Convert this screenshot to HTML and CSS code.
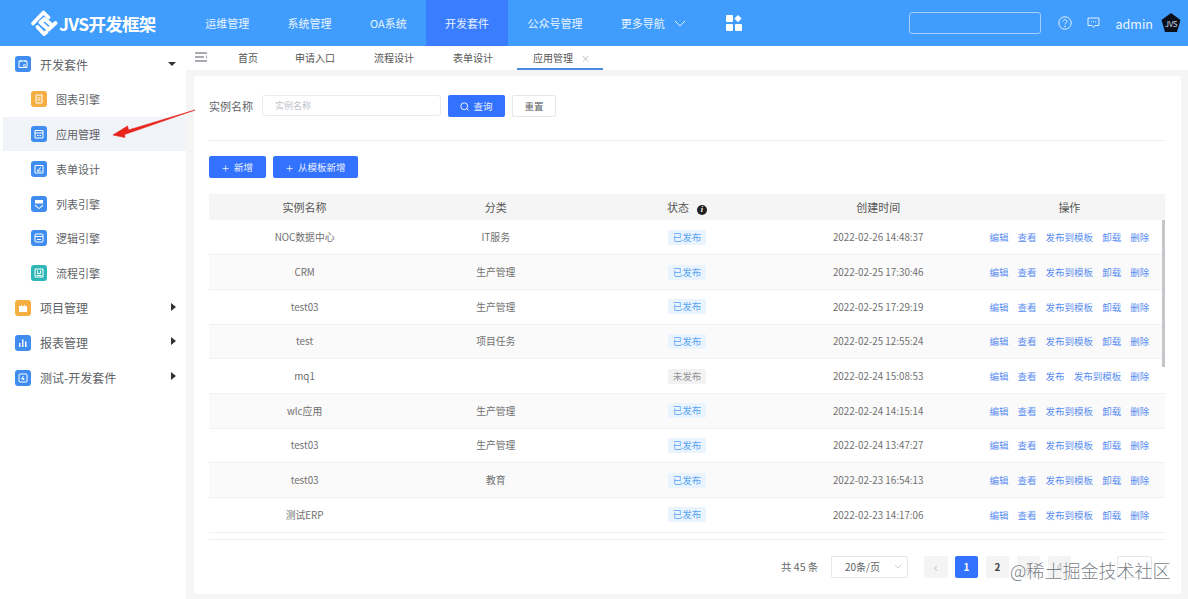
FILE: index.html
```html
<!DOCTYPE html>
<html lang="zh">
<head>
<meta charset="utf-8">
<title>JVS开发框架</title>
<link rel="stylesheet" href="styles.css">
</head>
<body>
<header class="topbar">
  <div class="logo">
    <svg class="logo-mark" viewBox="0 0 28 28" width="28" height="28" fill="none" stroke="#fff" stroke-width="3.800" stroke-linejoin="round" stroke-linecap="round">
      <path d="M3 14.500 L13.500 3.500 L18.500 8.500"/>
      <path d="M25.500 14 L18.500 20.500 L10.500 13.500 L14.500 10 L20.500 15"/>
      <path d="M7.500 18 L14 25 L16.500 23"/>
    </svg>
    <span class="logo-text">JVS开发框架</span>
  </div>
  <nav class="nav">
    <a class="nav-item">运维管理</a>
    <a class="nav-item">系统管理</a>
    <a class="nav-item">OA系统</a>
    <a class="nav-item is-active">开发套件</a>
    <a class="nav-item">公众号管理</a>
    <a class="nav-item nav-more">更多导航
      <svg viewBox="0 0 12 7" width="12" height="7" fill="none" stroke="#e4f0ff" stroke-width="1"><path d="M1 1l5 5 5-5"/></svg>
    </a>
    <svg class="apps" viewBox="0 0 16 16" width="16" height="16" fill="#fff">
      <rect x="0" y="0" width="7" height="7" rx="1"/>
      <path d="M12 0l3.600 3.600L12 7.200 8.400 3.600z"/>
      <rect x="0" y="9" width="7" height="7" rx="1"/>
      <rect x="9" y="9" width="7" height="7" rx="1"/>
    </svg>
  </nav>
  <div class="top-right">
    <div class="top-search"></div>
    <svg class="top-icon" viewBox="0 0 14 14" width="14" height="14" fill="none" stroke="#e4f0ff" stroke-width="1"><circle cx="7" cy="7" r="6.200"/><path d="M5.200 5.400a1.800 1.800 0 1 1 2.700 1.600c-.6.400-.9.700-.9 1.400"/><circle cx="7" cy="10.300" r=".4"/></svg>
    <svg class="top-icon msg" viewBox="0 0 13 12" width="13" height="12" fill="none" stroke="#e4f0ff" stroke-width="1"><path d="M1 1h11v7.500H8L6.500 10.500 5 8.500H1z"/><path d="M4 4.700h1M6 4.700h1M8 4.700h1"/></svg>
    <span class="user">admin</span>
    <div class="avatar"><svg viewBox="0 0 20 20" width="20" height="20"><path d="M10 0l9.500 7-3.500 12H4L.5 7z" fill="#0b0f1a"/></svg><span class="avatar-text">JVS</span></div>
  </div>
</header>

<div class="shell">
  <aside class="sidebar">
    <div class="menu-row top">
      <span class="ico blue"><svg viewBox="0 0 10 10" width="10" height="10" fill="none" stroke="#fff" stroke-width="1"><path d="M1 2h8v6.500H1zM3 1v2M7 1v2"/><circle cx="6.500" cy="6.500" r="1"/></svg></span>
      <span class="menu-label">开发套件</span><span class="caret down"></span>
    </div>
    <div class="menu-row sub">
      <span class="ico orange"><svg viewBox="0 0 10 10" width="10" height="10" fill="none" stroke="#fff" stroke-width="1"><path d="M2 1h6v8H2zM3.500 4h3M3.500 6h3"/></svg></span>
      <span class="sub-label">图表引擎</span>
    </div>
    <div class="menu-row sub is-current">
      <span class="ico blue"><svg viewBox="0 0 10 10" width="10" height="10" fill="none" stroke="#fff" stroke-width="1"><path d="M1 4V1.500h8V4M1 4h8v5H1z"/><path d="M3 6.500h1.500M5.500 6.500H7"/></svg></span>
      <span class="sub-label">应用管理</span>
    </div>
    <div class="menu-row sub">
      <span class="ico blue"><svg viewBox="0 0 10 10" width="10" height="10" fill="none" stroke="#fff" stroke-width="1"><path d="M1 1.500h8v7.500H1zM3 7l4-3.500M3 7h4"/></svg></span>
      <span class="sub-label">表单设计</span>
    </div>
    <div class="menu-row sub">
      <span class="ico blue"><svg viewBox="0 0 10 10" width="10" height="10" fill="#fff"><path d="M1 1h8v3.500H1zM1 5.500l4 3.500 4-3.500v1.500L5 10 1 7z"/></svg></span>
      <span class="sub-label">列表引擎</span>
    </div>
    <div class="menu-row sub">
      <span class="ico blue"><svg viewBox="0 0 10 10" width="10" height="10" fill="none" stroke="#fff" stroke-width="1"><rect x="1" y="1" width="8" height="8" rx="1"/><path d="M1 3.500h8M3 6.500h4"/></svg></span>
      <span class="sub-label">逻辑引擎</span>
    </div>
    <div class="menu-row sub">
      <span class="ico teal"><svg viewBox="0 0 10 10" width="10" height="10" fill="none" stroke="#fff" stroke-width="1"><path d="M1 1h8v8H1zM3.500 2.500v3h3v-3M2.500 7.500h5"/></svg></span>
      <span class="sub-label">流程引擎</span>
    </div>
    <div class="menu-row top">
      <span class="ico orange"><svg viewBox="0 0 10 10" width="10" height="10" fill="#fff"><path d="M1 3h8v6H1zM3 1l1 2H3zM7 1L6 3h1z"/></svg></span>
      <span class="menu-label">项目管理</span><span class="caret right"></span>
    </div>
    <div class="menu-row top">
      <span class="ico blue"><svg viewBox="0 0 10 10" width="10" height="10" fill="#fff"><path d="M1 5h1.500v4H1zM4 1.500h1.500V9H4zM7 3.500h1.500V9H7z"/></svg></span>
      <span class="menu-label">报表管理</span><span class="caret right"></span>
    </div>
    <div class="menu-row top">
      <span class="ico blue"><svg viewBox="0 0 10 10" width="10" height="10" fill="none" stroke="#fff" stroke-width="1"><rect x="1" y="1" width="8" height="8" rx="1"/><path d="M5.500 3L3.500 6h3M5.500 5v2"/></svg></span>
      <span class="menu-label">测试-开发套件</span><span class="caret right"></span>
    </div>
  </aside>

  <main class="main">
    <div class="tabs">
      <svg class="hamburger" viewBox="0 0 12 10" width="12" height="10" fill="none" stroke="#556" stroke-width="1"><path d="M0 1h12M0 5h9M0 9h12M12 3.500v3"/></svg>
      <a class="tab first">首页</a>
      <a class="tab">申请入口</a>
      <a class="tab">流程设计</a>
      <a class="tab">表单设计</a>
      <a class="tab is-active">应用管理<span class="tab-x">×</span></a>
    </div>
    <div class="content">
      <section class="card">
        <form class="filter">
          <label class="filter-label">实例名称</label>
          <div class="input">实例名称</div>
          <button type="button" class="btn primary"><svg viewBox="0 0 10 10" width="9" height="9" fill="none" stroke="#fff" stroke-width="1"><circle cx="4.700" cy="4.700" r="3.800"/><path d="M7.500 7.500l2 2"/></svg>查询</button>
          <button type="button" class="btn plain">重置</button>
        </form>
        <div class="actions">
          <button type="button" class="btn primary wide"><span class="plus">+</span>新增</button>
          <button type="button" class="btn primary wide"><span class="plus">+</span>从模板新增</button>
        </div>
        <div class="table-wrap">
          <table class="table">
            <thead>
              <tr><th>实例名称</th><th>分类</th><th>状态<span class="info">i</span></th><th>创建时间</th><th>操作</th></tr>
            </thead>
            <tbody>
              <tr><td>NOC数据中心</td><td>IT服务</td><td><span class="tag">已发布</span></td><td>2022-02-26 14:48:37</td><td class="ops"><a>编辑</a><a>查看</a><a>发布到模板</a><a>卸载</a><a>删除</a></td></tr>
              <tr class="alt"><td>CRM</td><td>生产管理</td><td><span class="tag">已发布</span></td><td>2022-02-25 17:30:46</td><td class="ops"><a>编辑</a><a>查看</a><a>发布到模板</a><a>卸载</a><a>删除</a></td></tr>
              <tr><td>test03</td><td>生产管理</td><td><span class="tag">已发布</span></td><td>2022-02-25 17:29:19</td><td class="ops"><a>编辑</a><a>查看</a><a>发布到模板</a><a>卸载</a><a>删除</a></td></tr>
              <tr class="alt"><td>test</td><td>项目任务</td><td><span class="tag">已发布</span></td><td>2022-02-25 12:55:24</td><td class="ops"><a>编辑</a><a>查看</a><a>发布到模板</a><a>卸载</a><a>删除</a></td></tr>
              <tr><td>mq1</td><td></td><td><span class="tag off">未发布</span></td><td>2022-02-24 15:08:53</td><td class="ops"><a>编辑</a><a>查看</a><a>发布</a><a>发布到模板</a><a>删除</a></td></tr>
              <tr class="alt"><td>wlc应用</td><td>生产管理</td><td><span class="tag">已发布</span></td><td>2022-02-24 14:15:14</td><td class="ops"><a>编辑</a><a>查看</a><a>发布到模板</a><a>卸载</a><a>删除</a></td></tr>
              <tr><td>test03</td><td>生产管理</td><td><span class="tag">已发布</span></td><td>2022-02-24 13:47:27</td><td class="ops"><a>编辑</a><a>查看</a><a>发布到模板</a><a>卸载</a><a>删除</a></td></tr>
              <tr class="alt"><td>test03</td><td>教育</td><td><span class="tag">已发布</span></td><td>2022-02-23 16:54:13</td><td class="ops"><a>编辑</a><a>查看</a><a>发布到模板</a><a>卸载</a><a>删除</a></td></tr>
              <tr><td>测试ERP</td><td></td><td><span class="tag">已发布</span></td><td>2022-02-23 14:17:06</td><td class="ops"><a>编辑</a><a>查看</a><a>发布到模板</a><a>卸载</a><a>删除</a></td></tr>
            </tbody>
          </table>
          <div class="scrollbar"></div>
        </div>
        <div class="pager">
          <span class="total">共 45 条</span>
          <div class="size">20条/页<svg viewBox="0 0 8 5" width="8" height="5" fill="none" stroke="#c5c8ce" stroke-width=".8"><path d="M1 1l3 3 3-3"/></svg></div>
          <span class="pg prev">‹</span>
          <span class="pg on">1</span>
          <span class="pg">2</span>
          <span class="pg faint">3</span>
          <span class="pg faint">4</span>
          <span class="pg-gap"></span>
          <span class="pg-input"></span>
        </div>
      </section>
    </div>
  </main>
</div>

<svg class="arrow" viewBox="0 0 90 32" width="90" height="32"><path d="M86 4L19.500 24 18.500 20 4 29l12 2.500-.5-3z" fill="#e8231c" stroke="#e8231c" stroke-width=".6" stroke-linejoin="round"/></svg>
<div class="watermark">@稀土掘金技术社区</div>
</body>
</html>
```

FILE: styles.css
```css
* { box-sizing: border-box; }
html, body { margin: 0; height: 100%; }
body {
  width: 1188px;
  height: 599px;
  overflow: hidden;
  background: #f5f5f5;
  color: #606266;
  font-family: "Noto Sans CJK SC", "Noto Sans", sans-serif;
  font-size: 10px;
  position: relative;
}
a { color: inherit; text-decoration: none; }

/* top bar */
.topbar {
  height: 46px;
  background: #409dfe;
  display: flex;
  align-items: stretch;
  color: #e9f3ff;
}
.logo {
  width: 186px;
  padding-left: 30px;
  display: flex;
  align-items: center;
  gap: 1px;
  flex: none;
}
.logo-mark { flex: none; }
.logo-text { font-size: 17.500px; font-weight: 700; color: #fff; letter-spacing: -.7px; white-space: nowrap; }
.nav { display: flex; align-items: stretch; flex: none; }
.nav-item {
  padding: 0 19.200px;
  display: flex;
  align-items: center;
  gap: 9px;
  font-size: 11px;
  white-space: nowrap;
}
.nav-item.is-active { background: #3a7dff; }
.apps { align-self: center; margin-left: 21px; }
.top-right {
  margin-left: auto;
  display: flex;
  align-items: center;
  padding-right: 7px;
}
.top-search {
  width: 132px;
  height: 22px;
  border: 1px solid #a6d0fb;
  border-radius: 3px;
  margin-right: 17px;
}
.top-icon { flex: none; }
.top-icon.msg { margin-left: 15px; }
.user { font-size: 12.500px; margin-left: 16px; color: #eef6ff; }
.avatar { width: 20px; height: 20px; margin-left: 8px; position: relative; }
.avatar svg { display: block; }
.avatar-text {
  position: absolute;
  inset: 0;
  text-align: center;
  line-height: 21px;
  font-size: 8px;
  color: #c8d4e6;
  letter-spacing: -.4px;
}

/* shell */
.shell { display: flex; height: 553px; }
.sidebar {
  width: 186px;
  flex: none;
  background: #fff;
  padding-top: 1px;
}
.menu-row {
  height: 34.800px;
  display: flex;
  align-items: center;
  position: relative;
  margin-left: 3px;
}
.menu-row.top { padding-left: 12px; }
.menu-row.sub { padding-left: 28px; }
.menu-row.is-current { background: #f0f3f8; }
.ico {
  width: 16px;
  height: 16px;
  border-radius: 3px;
  display: flex;
  align-items: center;
  justify-content: center;
  flex: none;
}
.ico.blue { background: #3f8df0; }
.ico.orange { background: #f4ae42; }
.ico.teal { background: #2fb6b6; }
.menu-label { font-size: 12px; margin-left: 9px; color: #606266; }
.sub-label { font-size: 11px; margin-left: 9px; color: #606266; }
.caret { position: absolute; width: 0; height: 0; }
.caret.down { right: 10px; top: 15px; border: 4px solid transparent; border-top: 4.500px solid #303133; border-bottom: 0; }
.caret.right { right: 10px; top: 12px; border: 4px solid transparent; border-left: 5px solid #303133; border-right: 0; }

/* main */
.main { flex: 1; display: flex; flex-direction: column; min-width: 0; }
.tabs {
  height: 24px;
  background: #fff;
  display: flex;
  align-items: stretch;
  padding-left: 9px;
  flex: none;
}
.hamburger { align-self: center; margin-right: 11.500px; flex: none; margin-top: -2px; }
.tab {
  padding: 0 19.500px;
  line-height: 24px;
  font-size: 10px;
  color: #555;
  white-space: nowrap;
}
.tab.first { margin-right: -2px; }
.tab.is-active {
  padding: 0 16px;
  border-bottom: 2px solid #4b8ae6;
  margin-left: 4.500px;
  line-height: 23px;
}
.tab-x {
  display: inline-block;
  width: 6px;
  color: #b5b5b5;
  margin-left: 8px;
  font-size: 9px;
  line-height: 1;
  overflow: visible;
}
.content { flex: 1; padding: 6px 7px 5px 8px; min-height: 0; }
.card {
  height: 100%;
  background: #fff;
  border-radius: 3px;
  padding: 19px 16px 0 15px;
  display: flex;
  flex-direction: column;
}

/* filter */
.filter {
  height: 46px;
  border-bottom: 1px solid #ebeef5;
  display: flex;
  align-items: flex-start;
  flex: none;
}
.filter-label { font-size: 11px; line-height: 22px; margin-right: 9px; color: #606266; }
.input {
  width: 179px;
  height: 21px;
  border: 1px solid #e8eaef;
  border-radius: 3px;
  padding-left: 12px;
  font-size: 9px;
  line-height: 19px;
  color: #c0c4cc;
  margin-right: 7px;
}
.btn {
  height: 22px;
  border-radius: 2px;
  font: inherit;
  font-size: 9.500px;
  display: inline-flex;
  align-items: center;
  justify-content: center;
  gap: 4px;
  padding: 0;
  cursor: pointer;
}
.btn.primary { background: #3371ff; border: 0; color: #e8f0ff; width: 57px; }
.btn.plain { background: #fff; border: 1px solid #e4e7ed; color: #606266; width: 44px; margin-left: 7px; }
.actions { display: flex; gap: 7px; margin-top: 15px; height: 22px; flex: none; }
.btn.wide { padding: 0 13px; width: auto; gap: 5px; }
.plus { font-size: 13px; line-height: 1; font-weight: 300; }

/* table */
.table-wrap {
  margin-top: 15.500px;
  height: 346.500px;
  overflow: hidden;
  position: relative;
  flex: none;
  border-bottom: 1px solid #eef0f3;
}
.table { width: 100%; border-collapse: collapse; table-layout: fixed; }
.table th {
  height: 26.500px;
  background: #f5f5f5;
  font-weight: 400;
  font-size: 11px;
  color: #555;
  text-align: center;
  padding: 0;
}
.table td {
  height: 34.700px;
  padding: 0;
  text-align: center;
  border-bottom: 1px solid #f0f1f4;
  font-size: 9.800px;
  color: #707070;
  white-space: nowrap;
}
.table tr.alt td { background: #fafafa; }
.info {
  display: inline-block;
  width: 10px;
  height: 10px;
  border-radius: 50%;
  background: #222;
  color: #fff;
  font: italic 700 8px/10px "Liberation Serif", serif;
  margin-left: 8px;
  vertical-align: 0;
}
.tag {
  display: inline-block;
  height: 15px;
  line-height: 15px;
  padding: 0 4.500px;
  background: #e9f4ff;
  border-radius: 2px;
  color: #5aa4f3;
  font-size: 9.500px;
}
.tag.off { background: #f2f2f2; color: #929498; }
.table td.ops { color: #5a8df0; font-size: 9.500px; }
.ops a { margin: 0 4.500px; }
.scrollbar {
  position: absolute;
  right: 0;
  top: 26.500px;
  width: 3px;
  height: 147px;
  background: #c4c6c9;
}

/* pager */
.pager {
  display: flex;
  align-items: center;
  margin-top: 15px;
  height: 23px;
  flex: none;
  padding-left: 572px;
}
.total { font-size: 10.500px; width: 50px; flex: none; color: #666; }
.size {
  width: 77px;
  height: 22px;
  border: 1px solid #e4e7ed;
  border-radius: 2px;
  display: flex;
  align-items: center;
  justify-content: space-between;
  padding: 0 5px 0 13px;
  font-size: 10px;
  margin-right: 16px;
  flex: none;
}
.pg {
  width: 23px;
  height: 22px;
  background: #f4f4f5;
  border-radius: 2px;
  text-align: center;
  line-height: 22px;
  font-weight: 700;
  font-size: 10px;
  color: #444;
  margin-right: 8px;
  flex: none;
}
.pg.prev { width: 24px; margin-right: 7px; color: #c0c4cc; font-weight: 400; font-size: 13px; }
.pg.on { background: #3371ff; color: #fff; }
.pg.faint { color: #b9bbbf; font-weight: 400; }
.pg-gap { width: 38px; flex: none; }
.pg-input { width: 35px; height: 22px; border: 1px solid #e4e7ed; border-radius: 2px; flex: none; }

/* overlays */
.arrow { position: absolute; left: 109px; top: 106px; }
.watermark {
  position: absolute;
  left: 1010px;
  top: 557px;
  font-size: 18px;
  line-height: 26px;
  color: rgba(90, 95, 105, .82);
  text-shadow: 0 0 2px #fff;
  white-space: nowrap;
  font-family: "Noto Sans CJK SC", sans-serif;
  font-weight: 300;
}
```
